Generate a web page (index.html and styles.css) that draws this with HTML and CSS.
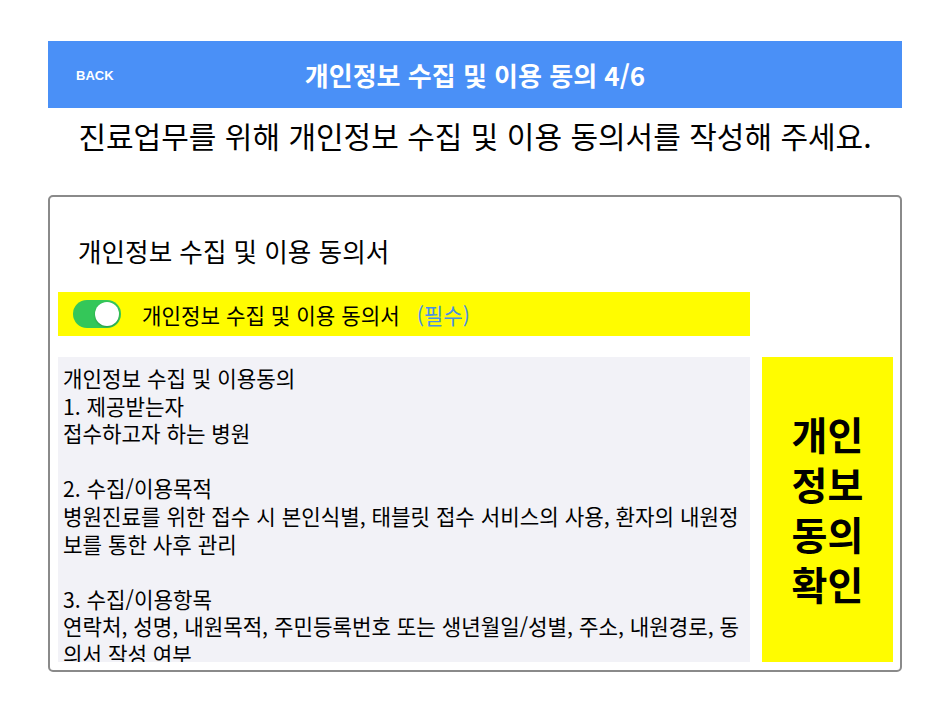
FILE: index.html
```html
<!DOCTYPE html>
<html lang="ko">
<head>
<meta charset="utf-8">
<link rel="stylesheet" href="styles.css">
</head>
<body>
<div class="page">
  <header class="topbar">
    <span class="back">BACK</span>
    <h1 class="title">개인정보 수집 및 이용 동의 4/6</h1>
  </header>
  <p class="subtitle">진료업무를 위해 개인정보 수집 및 이용 동의서를 작성해 주세요.</p>
  <section class="box">
    <h2 class="heading">개인정보 수집 및 이용 동의서</h2>
    <div class="toggle-row">
      <span class="switch"><span class="knob"></span></span>
      <span class="toggle-label">개인정보 수집 및 이용 동의서</span>
      <span class="required">(필수)</span>
    </div>
    <div class="content">
      <div class="terms">
        <p>개인정보 수집 및 이용동의</p>
        <p>1. 제공받는자</p>
        <p>접수하고자 하는 병원</p>
        <p>&nbsp;</p>
        <p>2. 수집/이용목적</p>
        <p>병원진료를 위한 접수 시 본인식별, 태블릿 접수 서비스의 사용, 환자의 내원정보를 통한 사후 관리</p>
        <p>&nbsp;</p>
        <p>3. 수집/이용항목</p>
        <p>연락처, 성명, 내원목적, 주민등록번호 또는 생년월일/성별, 주소, 내원경로, 동의서 작성 여부</p>
      </div>
      <button class="confirm">개인<br>정보<br>동의<br>확인</button>
    </div>
  </section>
</div>
</body>
</html>
```

FILE: styles.css
```css
* { box-sizing: border-box; }
html, body { margin: 0; padding: 0; background: #ffffff; }
body {
  font-family: "Noto Sans CJK KR", "Noto Sans", sans-serif;
  color: #000;
}
.page {
  padding: 41px 48px 0 48px;
}
.topbar {
  position: relative;
  height: 67px;
  background: #4a90f7;
  display: flex;
  align-items: center;
  justify-content: center;
}
.back {
  position: absolute;
  left: 28px;
  top: 50%;
  transform: translateY(-50%);
  font-family: "Liberation Sans", Arial, sans-serif;
  font-weight: bold;
  font-size: 13px;
  color: #ffffff;
}
.title {
  margin: 0;
  font-size: 26px;
  font-weight: bold;
  color: #ffffff;
  line-height: 1;
}
.subtitle {
  margin: 0;
  height: 87px;
  padding-top: 8px;
  text-align: center;
  font-size: 30px;
  line-height: 38px;
}
.box {
  border: 2px solid #8a8a8a;
  border-radius: 5px;
  height: 477px;
  padding: 0 7px 8px 8px;
  display: flex;
  flex-direction: column;
}
.heading {
  margin: 0;
  padding: 37px 0 0 20px;
  height: 95px;
  font-size: 25.6px;
  font-weight: normal;
  line-height: 34px;
}
.toggle-row {
  width: 692px;
  height: 44px;
  background: #fffc00;
  display: flex;
  align-items: center;
  padding-left: 15px;
}
.switch {
  position: relative;
  width: 48px;
  height: 28px;
  border-radius: 14px;
  background: #34c759;
  flex: none;
}
.knob {
  position: absolute;
  right: 2px;
  top: 2px;
  width: 24px;
  height: 24px;
  border-radius: 50%;
  background: #ffffff;
  box-shadow: 0 1px 2px rgba(0,0,0,0.25);
}
.toggle-label {
  margin-left: 21px;
  font-size: 21.2px;
}
.required {
  margin-left: 17px;
  font-size: 21.2px;
  color: #4a90e2;
}
.content {
  margin-top: 21px;
  display: grid;
  grid-template-columns: 692px 131px;
  column-gap: 12px;
  height: 305px;
}
.terms {
  background: #f2f2f7;
  height: 305px;
  overflow: hidden;
  padding: 7px 5px 0 5px;
  font-size: 21.2px;
  line-height: 27.6px;
}
.terms p { margin: 0; }
.confirm {
  border: none;
  margin: 0;
  padding: 0 0 4px 0;
  background: #fffc00;
  font-family: "Noto Sans CJK KR", "Noto Sans", sans-serif;
  font-weight: bold;
  font-size: 39px;
  line-height: 50px;
  color: #000;
  text-align: center;
}
```
